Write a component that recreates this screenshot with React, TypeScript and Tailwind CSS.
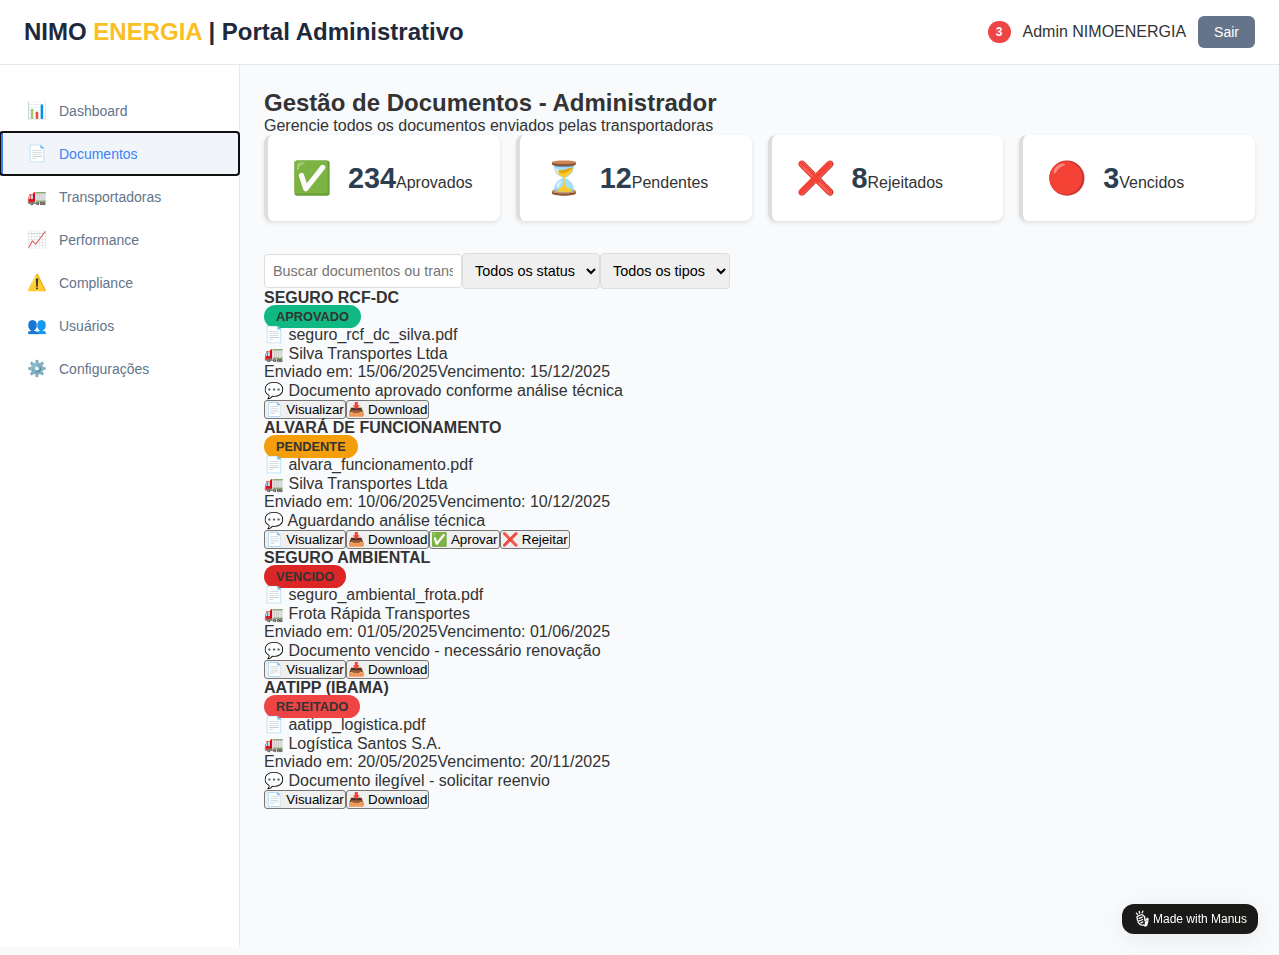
import React from "react";

const navItems = [
  { icon: "📊", label: "Dashboard" },
  { icon: "📄", label: "Documentos", active: true },
  { icon: "🚛", label: "Transportadoras" },
  { icon: "📈", label: "Performance" },
  { icon: "⚠️", label: "Compliance" },
  { icon: "👥", label: "Usuários" },
  { icon: "⚙️", label: "Configurações" },
];

const stats = [
  { icon: "✅", value: 234, label: "Aprovados" },
  { icon: "⏳", value: 12, label: "Pendentes" },
  { icon: "❌", value: 8, label: "Rejeitados" },
  { icon: "🔴", value: 3, label: "Vencidos" },
];

const baseActions = [
  { icon: "📄", label: "Visualizar" },
  { icon: "📥", label: "Download" },
];

const documents = [
  {
    title: "SEGURO RCF-DC",
    status: "APROVADO",
    color: "bg-[#10b981]",
    file: "seguro_rcf_dc_silva.pdf",
    company: "Silva Transportes Ltda",
    sent: "15/06/2025",
    due: "15/12/2025",
    note: "Documento aprovado conforme análise técnica",
    actions: baseActions,
  },
  {
    title: "ALVARÁ DE FUNCIONAMENTO",
    status: "PENDENTE",
    color: "bg-[#f59e0b]",
    file: "alvara_funcionamento.pdf",
    company: "Silva Transportes Ltda",
    sent: "10/06/2025",
    due: "10/12/2025",
    note: "Aguardando análise técnica",
    actions: [...baseActions, { icon: "✅", label: "Aprovar" }, { icon: "❌", label: "Rejeitar" }],
  },
  {
    title: "SEGURO AMBIENTAL",
    status: "VENCIDO",
    color: "bg-[#dc2626]",
    file: "seguro_ambiental_frota.pdf",
    company: "Frota Rápida Transportes",
    sent: "01/05/2025",
    due: "01/06/2025",
    note: "Documento vencido - necessário renovação",
    actions: baseActions,
  },
  {
    title: "AATIPP (IBAMA)",
    status: "REJEITADO",
    color: "bg-[#ef4444]",
    file: "aatipp_logistica.pdf",
    company: "Logística Santos S.A.",
    sent: "20/05/2025",
    due: "20/11/2025",
    note: "Documento ilegível - solicitar reenvio",
    actions: baseActions,
  },
];

function Header() {
  return (
    <header className="flex h-[65px] items-center justify-between border-b border-[#e2e8f0] bg-white px-6">
      <h1 className="text-[24px] leading-[normal] font-bold text-[#1e293b]">
        NIMO <span className="text-[#fbbf24]">ENERGIA</span> | Portal Administrativo
      </h1>
      <div className="flex items-center gap-3">
        <span className="rounded-[12px] bg-[#ef4444] px-2 py-1 text-[12px] leading-[14px] font-bold text-white">3</span>
        <span>Admin NIMOENERGIA</span>
        <button className="rounded-[6px] bg-[#64748b] px-4 py-2 text-[14px] leading-[16px] text-white">Sair</button>
      </div>
    </header>
  );
}

function Sidebar() {
  return (
    <nav className="h-[882px] w-[240px] shrink-0 border-r border-[#e2e8f0] bg-white py-6">
      {navItems.map((item) => (
        <button
          key={item.label}
          className={
            item.active
              ? "flex h-[43px] w-full items-center gap-3 rounded-[3px] border-l-[3px] border-[#3b82f6] bg-[#f1f5f9] px-6 text-left text-[14px] text-[#3b82f6] outline-2 -outline-offset-1 outline-[#101010]"
              : "flex h-[43px] w-full items-center gap-3 border-l-[3px] border-transparent px-6 text-left text-[14px] text-[#64748b]"
          }
        >
          <span className="w-5 text-center text-[16px] leading-[19px]">{item.icon}</span>
          <span>{item.label}</span>
        </button>
      ))}
    </nav>
  );
}

function ManusBadge() {
  return (
    <div className="fixed right-[21px] bottom-[21px] flex h-[30px] w-[136px] items-center gap-[3px] rounded-[12px] bg-[#1a1a19] pl-3 text-[12px] text-white shadow-[0_4px_24px_rgba(0,0,0,0.08)]">
      <svg width="16" height="18" viewBox="0 0 16 18" fill="none" stroke="white" strokeWidth="1.3" strokeLinecap="round" strokeLinejoin="round" className="shrink-0">
        <path d="M2.4 3.2 3.6 4.2M5.2 1.4 5.6 3M8.8 1.2 8.2 2.8" />
        <path d="M3.4 8.4C2.4 7.2 3 5.8 4.4 5.8l2-.8c1.2-.6 2.6-.3 3.2.8.9.3 1.3 1.2 1 2.1l.5 3 1.3-1.1.8-1.6.8.5-.3 3-.9 3.5-1.6.9-1.4-1.2c-2 .6-4-.1-4.9-1.7-.9-.6-1.1-1.5-.8-2.4-.9-.6-1.1-1.4-.7-2.4Z" />
        <path d="m5 8.4 3.3-1.2M5 11l3.6-1.5M6.6 13l2.2-1.1" />
        <path d="m11.6 12.4 1.2-.8-.6 2.6-1 .8Z" fill="white" />
      </svg>
      <span className="whitespace-nowrap">Made with Manus</span>
    </div>
  );
}

export default function App() {
  return (
    <div className="min-h-screen bg-[#f8fafc] font-['Liberation_Sans',Arial,sans-serif] text-[16px] leading-[normal] text-[#333]">
      <Header />
      <div className="flex">
        <Sidebar />
        <main className="min-w-0 flex-1 p-6">
          <h1 className="text-[24px] leading-[28px] font-bold">Gestão de Documentos - Administrador</h1>
          <p className="h-[18px]">Gerencie todos os documentos enviados pelas transportadoras</p>

          <section className="mb-8 grid grid-cols-4 gap-4">
            {stats.map((s) => (
              <div
                key={s.label}
                className="flex h-[86px] items-center gap-4 rounded-[8px] border-l-4 border-[#ddd] bg-white px-6 shadow-[0_2px_4px_rgba(0,0,0,0.1)]"
              >
                <span className="text-[32px] leading-[38px]">{s.icon}</span>
                <div className="whitespace-nowrap">
                  <span className="text-[28.8px] font-bold text-[#2c3e50]">{s.value}</span>
                  <span>{s.label}</span>
                </div>
              </div>
            ))}
          </section>

          <div className="flex h-[36px] items-center">
            <input
              className="h-[34px] w-[198px] rounded-[4px] border border-[#ddd] bg-white p-2 text-[14.4px] placeholder:text-[#757575]"
              placeholder="Buscar documentos ou transportadoras..."
            />
            <select className="h-[36px] w-[138px] rounded-[4px] border border-[#ddd] bg-[#efefef] p-2 text-[14.4px] text-black">
              <option>Todos os status</option>
            </select>
            <select className="h-[36px] w-[130px] rounded-[4px] border border-[#ddd] bg-[#efefef] p-2 text-[14.4px] text-black">
              <option>Todos os tipos</option>
            </select>
          </div>

          {documents.map((d) => (
            <article key={d.title}>
              <h3 className="h-[18px] font-bold">{d.title}</h3>
              <div className="h-[18px]">
                <span className={`rounded-[20px] px-3 py-1 text-[12.8px] font-bold ${d.color}`}>{d.status}</span>
              </div>
              <p className="h-[19px]">📄 {d.file}</p>
              <p className="h-[19px]">🚛 {d.company}</p>
              <p className="h-[18px]">
                <span>Enviado em: {d.sent}</span>
                <span>
                  Vencimento: <span className="[font-kerning:none]">{d.due}</span>
                </span>
              </p>
              <p className="h-[19px]">💬 {d.note}</p>
              <div className="flex h-[19px]">
                {d.actions.map((a) => (
                  <button
                    key={a.label}
                    className="h-[19px] rounded-[3px] border border-[#767676] bg-[#efefef] px-px text-[13.3333px] leading-[15px] whitespace-nowrap text-black"
                  >
                    <span className="-mr-[0.45px]">{a.icon}</span> {a.label}
                  </button>
                ))}
              </div>
            </article>
          ))}
        </main>
      </div>
      <ManusBadge />
    </div>
  );
}
